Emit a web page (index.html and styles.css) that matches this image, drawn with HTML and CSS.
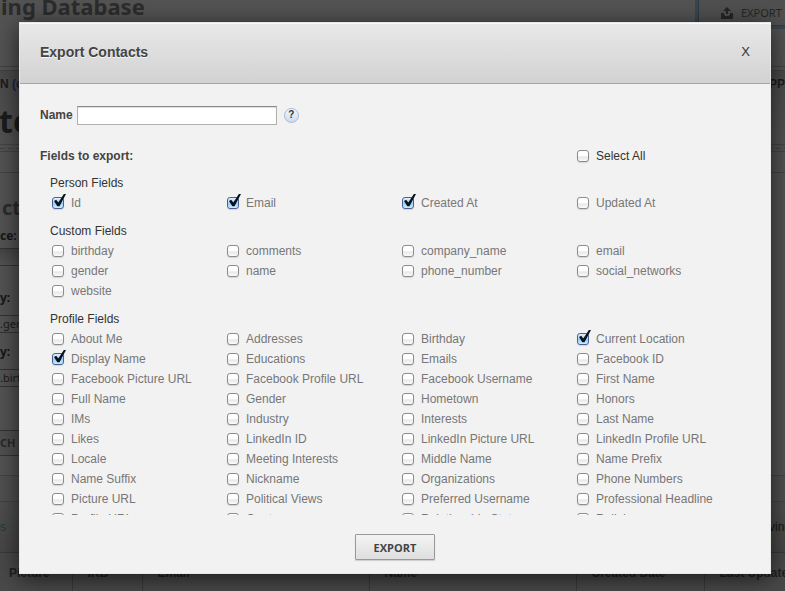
FILE: index.html
```
<!DOCTYPE html>
<html lang="en">
<head>
<meta charset="utf-8">
<title>Export Contacts</title>
<link rel="stylesheet" href="styles.css">
<script src="app.js" defer></script>
</head>
<body>
<div class="page">
  <header class="top">
    <h1 class="site-title">ing Database</h1>
    <button class="page-export" type="button">
      <svg width="12" height="12" viewBox="0 0 12 12" aria-hidden="true"><path d="M0 6v6h12V6H9v2H8v1H4V8H3V6zM5 7h2V4h3L6 0 2 4h3z" fill="currentColor"/></svg>
      EXPORT
    </button>
  </header>
  <div class="groove"></div>
  <section class="summary">
    <div class="crumbs"><span>N <a href="#">(c</a></span><span>PP</span></div>
    <h2 class="big">te</h2>
  </section>
  <div class="dashes"></div>
  <div class="strip"></div>
  <form class="filters">
    <h3 class="filter-title">ct</h3>
    <strong class="filter-label filter-label-tight">ce:</strong>
    <div class="field field-select"></div>
    <strong class="filter-label">y:</strong>
    <div class="field">.gen</div>
    <strong class="filter-label">y:</strong>
    <div class="field">.birt</div>
    <button class="search" type="button">CH</button>
  </form>
  <div class="rule-band"></div>
  <div class="paging"><span class="teal">s</span><span class="showing">ving</span></div>
  <table class="contacts">
    <thead><tr><th>Picture</th><th>IRB</th><th>Email</th><th>Name</th><th>Created Date</th><th>Last Updated</th></tr></thead>
  </table>
</div>

<div class="overlay">
  <form class="modal" role="dialog" aria-labelledby="modal-title">
    <header class="modal-head">
      <h2 id="modal-title">Export Contacts</h2>
      <button class="close" type="button" aria-label="Close">X</button>
    </header>
    <div class="modal-body">
      <div class="name-row">
        <label for="name">Name</label>
        <input id="name" type="text">
        <button class="help" type="button">?</button>
      </div>
      <div class="grid intro">
        <strong class="intro-title">Fields to export:</strong>
        <label class="check all"><input type="checkbox">Select All</label>
      </div>
      <div class="scroller" id="fields"></div>
      <button class="export" type="button">EXPORT</button>
    </div>
  </form>
</div>
</body>
</html>
```
FILE: styles.css
```
* { box-sizing: border-box; }
body {
  margin: 0;
  overflow: hidden;
  background: #535353;
  color: #222;
  font: 13px/20px "Liberation Sans", Arial, sans-serif;
}
h1, h2, h3 { margin: 0; }
button, input { font: inherit; color: inherit; }

.page { height: 100vh; overflow: hidden; }
.top {
  display: flex;
  justify-content: space-between;
  align-items: flex-start;
  height: 66px;
}
.site-title {
  padding-left: 1px;
  color: #2c2c2c;
  font: bold 22px/12px "Noto Sans", sans-serif;
}
.page-export {
  display: flex;
  align-items: center;
  gap: 8px;
  width: 87px;
  height: 26px;
  padding: 0 0 0 22px;
  border: 1px solid #2e3a45;
  border-top: 0;
  border-right: 0;
  background: #505050;
  box-shadow: 0 0 0 3px #3a4650;
  color: #252525;
  font: 11px/16px "Noto Sans", sans-serif;
  white-space: nowrap;
}
.page-export svg { flex: none; }
.groove { height: 5px; border: solid #424242; border-width: 1px 0; }
.summary { height: 73px; padding-top: 4px; background: linear-gradient(#4a4a4a, #535353); }
.crumbs {
  display: flex;
  justify-content: space-between;
  color: #1c1c1c;
  font-size: 12px;
  font-weight: bold;
  line-height: 18px;
}
.crumbs a { color: #1a2440; text-decoration: none; }
.big { color: #1c1c1c; font: bold 32px/56px "Open Sans", sans-serif; margin-left: -1px; }
.dashes {
  height: 8px;
  border: solid #444;
  border-width: 1px 0;
  background: repeating-linear-gradient(90deg, #424242 0 5px, transparent 5px 8px) 0 3px / 100% 1px no-repeat;
}
.strip { height: 21px; border-bottom: 1px solid #434343; }
.filters {
  display: flex;
  flex-direction: column;
  align-items: flex-start;
  height: 302px;
  padding-top: 21px;
}
.filter-title { margin: 0 0 4px 2px; color: #2b2b2b; font: bold 20px/28px "Open Sans", sans-serif; }
.filter-label { margin-bottom: 7px; color: #161616; font: bold 12px/20px "Noto Sans", sans-serif; }
.filter-label-tight { margin-bottom: 2px; }
.field {
  width: 180px;
  height: 18px;
  margin-bottom: 9px;
  border: solid #333;
  border-width: 1px 0;
  color: #1a1a1a;
  font: 11px/16px "Noto Sans", sans-serif;
}
.field-select { margin-bottom: 22px; background: linear-gradient(#444, #535353); }
.search {
  width: 60px;
  height: 26px;
  margin-top: 34px;
  padding: 0;
  border: 1px solid #333;
  border-left: 0;
  background: #505050;
  color: #282828;
  font: bold 11px/16px "Noto Sans", sans-serif;
  text-align: left;
}
.rule-band { height: 27px; border: solid #434343; border-width: 1px 0; background: #505050; }
.paging {
  display: flex;
  justify-content: space-between;
  align-items: center;
  height: 50px;
  background: linear-gradient(#4e4e4e, #464646);
  color: #151515;
  font-size: 12px;
}
.showing { margin-right: -6px; }
.teal { color: #1d3b3b; }
.contacts { width: 828px; border-collapse: collapse; table-layout: fixed; }
.contacts th {
  height: 40px;
  padding: 0 0 0 15px;
  border: solid #393939;
  border-width: 1px 1px 0 0;
  background: #494949;
  color: #202020;
  font-size: 12px;
  line-height: 16px;
  text-align: left;
  white-space: nowrap;
}
.contacts th:nth-child(1) { width: 72px; padding-left: 9px; }
.contacts th:nth-child(2) { width: 70px; }
.contacts th:nth-child(3) { width: 227px; }
.contacts th:nth-child(4) { width: 207px; }
.contacts th:nth-child(5) { width: 128px; }

.overlay {
  position: absolute;
  inset: 0;
  padding: 22px 14px 17px 19px;
}
.modal {
  height: 100%;
  display: flex;
  flex-direction: column;
  border: 1px solid #e6e8e6;
  background: #f2f2f2;
  box-shadow: 0 4px 22px rgba(0, 0, 0, .65);
  color: #444;
}
.modal-head {
  display: flex;
  justify-content: space-between;
  align-items: center;
  flex: none;
  height: 61px;
  padding: 0 20px 4px;
  border-top: 1px solid #fafafa;
  border-bottom: 1px solid #a5a5a5;
  background: linear-gradient(#e8e8e8, #d2d2d2);
  text-shadow: 0 1px 0 #f5f5f5;
}
.modal-head h2 { font-size: 14px; line-height: 20px; }
.close { padding: 0; border: 0; background: none; color: #333; font-size: 13px; }
.modal-body {
  display: flex;
  flex-direction: column;
  flex: 1;
  min-height: 0;
  padding: 21px 20px 13px;
}
.name-row { display: flex; align-items: center; height: 20px; font-weight: bold; font-size: 12px; }
.name-row input {
  width: 200px;
  height: 19px;
  margin: 0 7px 0 4px;
  padding: 0 2px;
  border: 1px solid #b0b0b0;
  border-top-color: #888;
  background: #fff;
  box-shadow: inset 0 1px 1px #ddd;
}
.help {
  width: 15px;
  height: 15px;
  padding: 0;
  border: 1px solid #aab8d4;
  border-radius: 50%;
  background: linear-gradient(#f6f9ff, #cddaf0);
  color: #333;
  font-size: 10px;
  font-weight: bold;
  line-height: 12px;
}
.grid { display: grid; grid-template-columns: repeat(4, 175px); }
.intro { margin: 21px 0 8px 10px; }
.intro-title { grid-column: 1 / 4; margin-left: -10px; font-size: 12px; }
.scroller { flex: 1; min-height: 0; margin-left: 10px; overflow: hidden; }
.group { margin: 0 0 9px; padding: 0; border: 0; }
.group legend { padding: 0; font-size: 12px; line-height: 19px; color: #333; }
.check {
  display: flex;
  align-items: center;
  height: 20px;
  color: #777;
  font-size: 12px;
  white-space: nowrap;
}
.all { color: #333; }
.check input {
  appearance: none;
  flex: none;
  width: 12px;
  height: 12px;
  margin: 0 7px 0 2px;
  border: 1px solid #8c8c8c;
  border-radius: 3px;
  background: linear-gradient(#fff 45%, #e8e8e8 60%, #fafafa);
  box-shadow: 0 1px 1px #d5d5d5;
}
.check input:checked {
  position: relative;
  border-color: #4a5f94;
  background: linear-gradient(#e3f1fd, #9fcdf3 55%, #c9efff);
}
.check input:checked::after {
  content: "";
  position: absolute;
  left: 1px;
  top: -4px;
  width: 12px;
  height: 13px;
  background: #071321;
  clip-path: polygon(0 54%, 18% 44%, 36% 66%, 82% 0, 100% 0, 46% 94%, 28% 94%);
}
.export {
  align-self: center;
  flex: none;
  width: 80px;
  height: 26px;
  margin-top: 19px;
  padding: 1px 0 0;
  border: 1px solid #999;
  border-radius: 1px;
  background: linear-gradient(#f4f4f4, #dedede);
  box-shadow: 0 1px 1px #ccc;
  font: bold 11px/16px "Open Sans", sans-serif;
}
```
FILE: app.js
```
const groups = [
  ["Person Fields", ["Id", "Email", "Created At", "Updated At"]],
  ["Custom Fields", ["birthday", "comments", "company_name", "email", "gender", "name", "phone_number", "social_networks", "website"]],
  ["Profile Fields", [
    "About Me", "Addresses", "Birthday", "Current Location",
    "Display Name", "Educations", "Emails", "Facebook ID",
    "Facebook Picture URL", "Facebook Profile URL", "Facebook Username", "First Name",
    "Full Name", "Gender", "Hometown", "Honors",
    "IMs", "Industry", "Interests", "Last Name",
    "Likes", "LinkedIn ID", "LinkedIn Picture URL", "LinkedIn Profile URL",
    "Locale", "Meeting Interests", "Middle Name", "Name Prefix",
    "Name Suffix", "Nickname", "Organizations", "Phone Numbers",
    "Picture URL", "Political Views", "Preferred Username", "Professional Headline",
    "Profile URL", "Quotes", "Relationship Status", "Religion"
  ]]
];
const selected = new Set(["Id", "Email", "Created At", "Current Location", "Display Name"]);

document.getElementById("fields").innerHTML = groups.map(([title, fields]) => `
  <fieldset class="group">
    <legend>${title}</legend>
    <div class="grid">${fields.map(field => `
      <label class="check"><input type="checkbox"${selected.has(field) ? " checked" : ""}>${field}</label>`).join("")}
    </div>
  </fieldset>`).join("");
```
